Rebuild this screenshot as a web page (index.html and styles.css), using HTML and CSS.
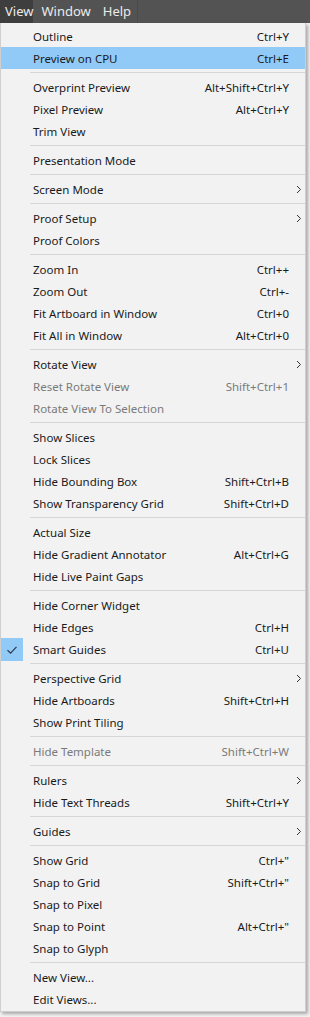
FILE: index.html
```html
<!DOCTYPE html>
<html lang="en">
<head>
  <meta charset="UTF-8" />
  <meta name="viewport" content="width=device-width, initial-scale=1.0"/>
  <title>View Menu</title>
  <link rel="stylesheet" href="styles.css">
</head>
<body>
  <div class="menubar">
    <div class="menubar-group">
      <span class="menubar-item active">View</span>
      <span class="menubar-item">Window</span>
      <span class="menubar-item">Help</span>
    </div>
  </div>

  <div class="menu" id="menu"></div>

<script>
  const groups = [
    [['Outline', 'Ctrl+Y'], ['Preview on CPU', 'Ctrl+E', 'hover']],
    [['Overprint Preview', 'Alt+Shift+Ctrl+Y'], ['Pixel Preview', 'Alt+Ctrl+Y'], ['Trim View']],
    [['Presentation Mode']],
    [['Screen Mode', '', 'sub']],
    [['Proof Setup', '', 'sub'], ['Proof Colors']],
    [['Zoom In', 'Ctrl++'], ['Zoom Out', 'Ctrl+-'], ['Fit Artboard in Window', 'Ctrl+0'], ['Fit All in Window', 'Alt+Ctrl+0']],
    [['Rotate View', '', 'sub'], ['Reset Rotate View', 'Shift+Ctrl+1', 'disabled'], ['Rotate View To Selection', '', 'disabled']],
    [['Show Slices'], ['Lock Slices'], ['Hide Bounding Box', 'Shift+Ctrl+B'], ['Show Transparency Grid', 'Shift+Ctrl+D']],
    [['Actual Size'], ['Hide Gradient Annotator', 'Alt+Ctrl+G'], ['Hide Live Paint Gaps']],
    [['Hide Corner Widget'], ['Hide Edges', 'Ctrl+H'], ['Smart Guides', 'Ctrl+U', 'checked']],
    [['Perspective Grid', '', 'sub'], ['Hide Artboards', 'Shift+Ctrl+H'], ['Show Print Tiling']],
    [['Hide Template', 'Shift+Ctrl+W', 'disabled']],
    [['Rulers', '', 'sub'], ['Hide Text Threads', 'Shift+Ctrl+Y']],
    [['Guides', '', 'sub']],
    [['Show Grid', 'Ctrl+"'], ['Snap to Grid', 'Shift+Ctrl+"'], ['Snap to Pixel'], ['Snap to Point', 'Alt+Ctrl+"'], ['Snap to Glyph']],
    [['New View...'], ['Edit Views...']]
  ];

  const checkSvg = '<svg width="12" height="10" viewBox="0 0 12 10"><path d="M1.5 5.2 L4.6 8.2 L10.5 1.8" fill="none" stroke="#2b3a4a" stroke-width="1.2"/></svg>';
  const arrowSvg = '<svg width="6" height="9" viewBox="0 0 6 9"><path d="M1 1 L4.5 4.5 L1 8" fill="none" stroke="#333" stroke-width="1"/></svg>';

  const menu = document.getElementById('menu');
  groups.forEach((group, i) => {
    if (i > 0) {
      const sep = document.createElement('div');
      sep.className = 'separator';
      menu.appendChild(sep);
    }
    group.forEach(([label, shortcut = '', flag = '']) => {
      const row = document.createElement('div');
      row.className = 'menu-item' + (flag ? ' ' + flag : '');
      row.innerHTML = `
        <span class="check">${flag === 'checked' ? checkSvg : ''}</span>
        <span class="label">${label}</span>
        <span class="shortcut">${shortcut}</span>
        <span class="arrow">${flag === 'sub' ? arrowSvg : ''}</span>
      `;
      menu.appendChild(row);
    });
  });
</script>

</body>
</html>
```

FILE: styles.css
```css
* {
  box-sizing: border-box;
  margin: 0;
  padding: 0;
}

body {
  background: #f2f2f2;
  font-family: 'Noto Sans', 'Open Sans', sans-serif;
  width: 310px;
  height: 1017px;
  overflow: hidden;
}

.menubar {
  height: 23px;
  background-color: #535353;
  display: flex;
}

.menubar-group {
  display: flex;
  width: 138px;
  border-right: 1px solid #4a4a4a;
}

.menubar-item {
  font-size: 13px;
  color: #ebebeb;
  line-height: 23px;
  padding: 0 6px;
}

.menubar-item.active {
  background-color: #3e3e3e;
  width: 36px;
  padding: 0 0 0 5px;
  margin-right: 2px;
}

.menu {
  width: 306px;
  background-color: #f2f2f2;
  border: 1px solid #cfcfcf;
  border-top: none;
  padding: 2px 0 1px;
  box-shadow: 2px 2px 3px rgba(0,0,0,0.3);
}

.menu-item {
  display: grid;
  grid-template-columns: 32px 1fr auto 16px;
  align-items: center;
  height: 22px;
  font-size: 11.5px;
  color: #1a1a1a;
}

.menu-item.hover {
  background-color: #91c9f7;
}

.menu-item.disabled {
  color: #7a7a7a;
}

.check {
  display: flex;
  align-items: center;
  justify-content: center;
  width: 22px;
  height: 23px;
}

.menu-item.checked .check {
  background-color: #91c9f7;
}

.shortcut {
  text-align: right;
  padding-left: 12px;
}

.arrow {
  display: flex;
  align-items: center;
  justify-content: center;
  padding-left: 4px;
}

.separator {
  height: 1px;
  margin: 3px 0 3px 29px;
  background-color: #d6d6d6;
}
```
